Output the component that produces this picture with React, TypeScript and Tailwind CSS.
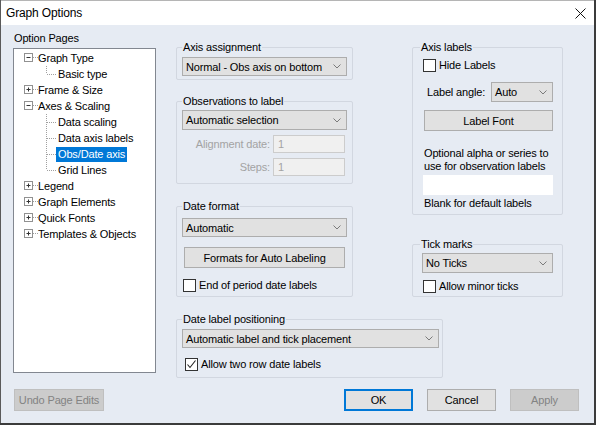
import React from "react";

const BG = "bg-[#e6ebf3]";

function Chevron() {
  return (
    <svg width="8" height="5" viewBox="0 0 8 5" className="shrink-0">
      <path d="M0.5 0.5 L4 4 L7.5 0.5" fill="none" stroke="#7a7a7a" strokeWidth="1" />
    </svg>
  );
}

function Select({ value, className = "" }: { value: string; className?: string }) {
  return (
    <div
      className={`flex h-[19px] items-center justify-between border border-[#adadad] bg-[#e1e1e1] pl-[3px] pr-[5px] text-[11px] leading-[14px] text-black ${className}`}
    >
      <span className="whitespace-nowrap">{value}</span>
      <Chevron />
    </div>
  );
}

function Button({
  label,
  className = "",
  disabled = false,
  primary = false,
}: {
  label: string;
  className?: string;
  disabled?: boolean;
  primary?: boolean;
}) {
  const tone = disabled
    ? "border border-[#bfbfbf] bg-[#cccccc] text-[#838383]"
    : primary
      ? "border-2 border-[#0078d7] bg-[#e1e1e1] text-black"
      : "border border-[#adadad] bg-[#e1e1e1] text-black";
  return (
    <div className={`flex items-center justify-center text-[11px] leading-[14px] ${tone} ${className}`}>
      {label}
    </div>
  );
}

function Checkbox({ checked = false }: { checked?: boolean }) {
  return (
    <div className="flex h-[13px] w-[13px] shrink-0 items-center justify-center border border-[#333333] bg-white">
      {checked && (
        <svg width="11" height="11" viewBox="0 0 11 11">
          <path d="M1.5 5.5 L4 8.5 L9.5 1.5" fill="none" stroke="#222" strokeWidth="1.1" />
        </svg>
      )}
    </div>
  );
}

function Check({ label, checked, className = "" }: { label: string; checked?: boolean; className?: string }) {
  return (
    <div className={`flex items-center gap-[3px] text-[11px] leading-[14px] ${className}`}>
      <Checkbox checked={checked} />
      <span className="whitespace-nowrap">{label}</span>
    </div>
  );
}

function Group({
  label,
  className = "",
  labelLeft = "left-[5px]",
  children,
}: {
  label: string;
  className?: string;
  labelLeft?: string;
  children: React.ReactNode;
}) {
  return (
    <div className={`relative rounded-[2px] border border-[#d2d7e0] ${className}`}>
      <span
        className={`absolute -top-[8px] ${labelLeft} ${BG} px-[1px] text-[11px] leading-[14px] whitespace-nowrap`}
      >
        {label}
      </span>
      {children}
    </div>
  );
}

function DisabledField({ label }: { label: string }) {
  return (
    <div className="flex h-[18px] items-center justify-end pr-[2px]">
      <span className="text-[11px] leading-[14px] text-[#a3a3a3]">{label}</span>
      <div className="ml-[3px] flex h-[18px] w-[72px] items-center border border-[#cccccc] bg-[#f0f0f0] pl-[4px] text-[11px] text-[#a3a3a3]">
        1
      </div>
    </div>
  );
}

function ExpandBox({ open }: { open: boolean }) {
  return (
    <svg width="24" height="16" viewBox="0 0 24 16" className="shrink-0">
      <rect x="10.5" y="3.5" width="8" height="8" fill="white" stroke="#919191" />
      <path d="M12.5 7.5 H16.5" stroke="#333" />
      {!open && <path d="M14.5 5.5 V9.5" stroke="#333" />}
      <path d="M19 7.5 H24" stroke="#a0a0a0" strokeDasharray="1 1" />
    </svg>
  );
}

function ChildLine({ last }: { last: boolean }) {
  return (
    <svg width="42" height="16" viewBox="0 0 42 16" className="shrink-0">
      <path d={last ? "M32.5 0 V8" : "M32.5 0 V16"} stroke="#a0a0a0" strokeDasharray="1 1" />
      <path d="M33 8.5 H42" stroke="#a0a0a0" strokeDasharray="1 1" />
    </svg>
  );
}

type Node = { label: string; open?: boolean; children?: string[] };

const tree: Node[] = [
  { label: "Graph Type", open: true, children: ["Basic type"] },
  { label: "Frame & Size" },
  { label: "Axes & Scaling", open: true, children: ["Data scaling", "Data axis labels", "Obs/Date axis", "Grid Lines"] },
  { label: "Legend" },
  { label: "Graph Elements" },
  { label: "Quick Fonts" },
  { label: "Templates & Objects" },
];

function Tree() {
  return (
    <div className="h-[325px] w-[143px] border border-[#828790] bg-white pt-[1px] text-[11px] leading-[14px]">
      {tree.map((n) => (
        <div key={n.label}>
          <div className="flex h-[16px] items-center">
            <ExpandBox open={!!n.open} />
            <span className="whitespace-nowrap">{n.label}</span>
          </div>
          {n.open &&
            n.children?.map((c, i) => {
              const selected = c === "Obs/Date axis";
              return (
                <div key={c} className="flex h-[16px] items-center">
                  <ChildLine last={i === (n.children?.length ?? 0) - 1} />
                  <span
                    className={`flex h-[15px] items-center px-[2px] whitespace-nowrap ${
                      selected ? "bg-[#0078d7] text-white" : ""
                    }`}
                  >
                    {c}
                  </span>
                </div>
              );
            })}
        </div>
      ))}
    </div>
  );
}

export default function App() {
  return (
    <div className="h-[425px] w-[596px] overflow-hidden bg-[#3b3b3b] font-['Liberation_Sans',Arial,sans-serif] tracking-[-0.15px] text-black">
      <div className={`flex h-[423px] w-[594px] flex-col border-l border-[#5a5a5a] ${BG}`}>
        {/* title bar */}
        <div className="flex h-[25px] items-center justify-between border-t border-[#b5b5b5] bg-white pl-[5px] pr-[8px]">
          <span className="text-[12px] leading-[16px]">Graph Options</span>
          <svg width="11" height="11" viewBox="0 0 11 11">
            <path d="M0.5 0.5 L10.5 10.5 M10.5 0.5 L0.5 10.5" stroke="#111" strokeWidth="1" />
          </svg>
        </div>

        {/* body */}
        <div className="flex h-[353px]">
          <div className="pl-[12px] pt-[6px]">
            <div className="pl-[1px] text-[11px] leading-[14px]">Option Pages</div>
            <div className="mt-[3px]">
              <Tree />
            </div>
          </div>

          <div className="ml-[20px] flex flex-col pt-[22px]">
            <div className="flex gap-[59px]">
              {/* middle column */}
              <div className="flex w-[177px] flex-col">
                <Group label="Axis assignment" className="h-[33px] px-[5px] pt-[9px]">
                  <Select value="Normal - Obs axis on bottom" />
                </Group>

                <Group label="Observations to label" className="mt-[21px] h-[83px] px-[5px] pt-[8px]">
                  <Select value="Automatic selection" className="h-[20px]" />
                  <div className="mt-[5px] flex flex-col gap-[5px]">
                    <DisabledField label="Alignment date:" />
                    <DisabledField label="Steps:" />
                  </div>
                </Group>

                <Group label="Date format" className="mt-[22px] h-[91px] px-[5px] pt-[11px]">
                  <Select value="Automatic" />
                  <Button label="Formats for Auto Labeling" className="mx-[2px] mt-[10px] h-[21px]" />
                  <Check label="End of period date labels" className="mt-[10px] pl-[1px]" />
                </Group>
              </div>

              {/* right column */}
              <div className="flex w-[151px] flex-col">
                <Group label="Axis labels" labelLeft="left-[7px]" className="h-[168px] pl-[10px] pr-[9px] pt-[10px]">
                  <Check label="Hide Labels" />
                  <div className="mt-[10px] flex h-[20px] items-center pl-[4px]">
                    <span className="text-[11px] leading-[14px]">Label angle:</span>
                    <Select value="Auto" className="ml-auto h-[20px] w-[62px]" />
                  </div>
                  <Button label="Label Font" className="ml-[1px] mt-[8px] h-[21px]" />
                  <div className="mt-[16px] pl-[1px] text-[11px] leading-[13px]">
                    <div className="whitespace-nowrap">Optional alpha or series to</div>
                    <div className="whitespace-nowrap">use for observation labels</div>
                  </div>
                  <div className="mt-[2px] h-[20px] bg-white" />
                  <div className="mt-[1px] pl-[1px] text-[11px] leading-[14px] whitespace-nowrap">
                    Blank for default labels
                  </div>
                </Group>

                <Group label="Tick marks" labelLeft="left-[7px]" className="mt-[29px] h-[53px] px-[9px] pt-[8px]">
                  <Select value="No Ticks" className="h-[20px]" />
                  <Check label="Allow minor ticks" className="mt-[6px] pl-[1px]" />
                </Group>
              </div>
            </div>

            <Group label="Date label positioning" className="mt-[22px] h-[62px] w-[267px] pl-[5px] pr-[3px] pt-[9px]">
              <Select value="Automatic label and tick placement" />
              <Check label="Allow two row date labels" checked className="mt-[9px] pl-[3px]" />
            </Group>
          </div>
        </div>

        {/* footer */}
        <div className="mt-[11px] flex items-center pl-[13px] pr-[15px]">
          <Button label="Undo Page Edits" disabled className="h-[22px] w-[90px]" />
          <div className="ml-auto flex gap-[14px]">
            <Button label="OK" primary className="h-[22px] w-[69px]" />
            <Button label="Cancel" className="h-[22px] w-[69px]" />
            <Button label="Apply" disabled className="h-[22px] w-[69px]" />
          </div>
        </div>
      </div>
    </div>
  );
}
